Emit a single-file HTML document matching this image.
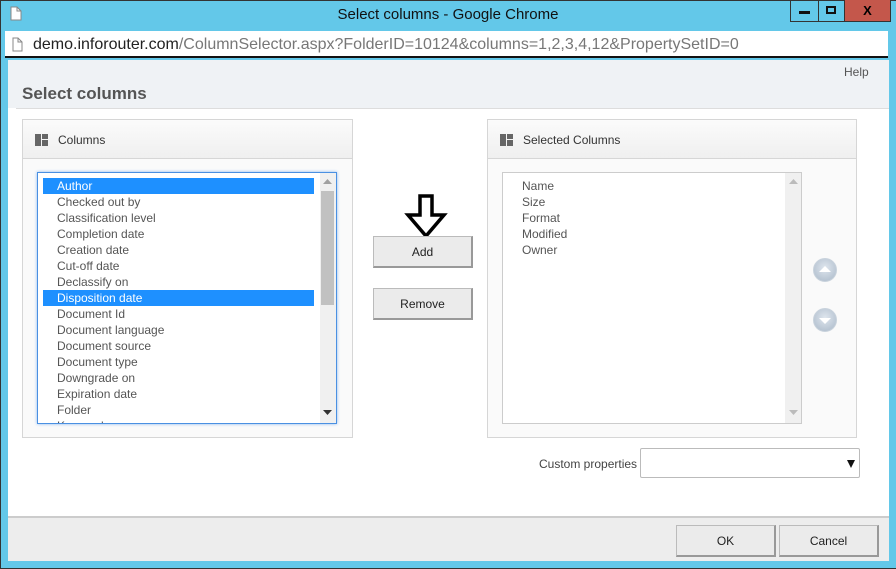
<!DOCTYPE html>
<html><head><style>
*{margin:0;padding:0;box-sizing:border-box}
body{width:896px;height:569px;background:#63c8e9;position:relative;overflow:hidden;font-family:"Liberation Sans",sans-serif;}
.abs{position:absolute}
.title{left:0;top:0;width:896px;text-align:center;top:6px;font-size:15px;color:#111}
.wb{top:0;height:22px;border:1px solid #333;border-top:none}
.addr{left:5px;top:31px;width:883px;height:27px;background:#fff;border-bottom:2px solid #111;font-size:16px;line-height:27px;padding-left:28px;color:#222}
.addr span{color:#777}
.content{left:8px;top:60px;width:881px;height:501px;background:#fff}
.panel{background:#fafafa;border:1px solid #d6d6d6}
.ph{height:39px;border-bottom:1px solid #d6d6d6;background:linear-gradient(#fbfbfb,#efefef);font-size:12px;color:#333;line-height:40px;padding-left:35px;position:relative}
.ic{position:absolute;left:12px;top:14px;width:13px;height:12px}
.list{background:#fff;font-size:12px;color:#555;line-height:16px}
.sel{background:#1e90ff;color:#fff}
.btn{background:#ebebeb;border:1px solid #bbb;border-right:2px solid #999;border-bottom:2px solid #999;text-align:center;font-size:12px;color:#222}
.circ{width:24px;height:24px;border-radius:50%;background:radial-gradient(circle at 50% 40%,#dfe6ee,#a9b8c8);border:1px solid #c8d2dc}
</style></head><body>
<div class="abs" style="left:0;top:0;width:896px;height:1px;background:#333"></div>
<div class="abs" style="left:0;top:0;width:1px;height:569px;background:#333"></div>
<div class="abs" style="left:0;top:568px;width:896px;height:1px;background:#333"></div>
<svg class="abs" style="left:10px;top:6px" width="12" height="15"><path d="M1 1H7L11 5V14H1Z" fill="#fff" stroke="#888"/><path d="M7 1V5H11" fill="none" stroke="#888"/></svg>
<div class="abs title">Select columns - Google Chrome</div>
<div class="abs wb" style="left:790px;width:29px"><div class="abs" style="left:8px;top:11px;width:11px;height:3px;background:#111"></div></div>
<div class="abs wb" style="left:818px;width:27px;border-left:none"><div class="abs" style="left:8px;top:6px;width:10px;height:8px;border:2px solid #111"></div></div>
<div class="abs wb" style="left:844px;width:47px;background:#c4574b;border-left:1px solid #333;text-align:center;font-weight:bold;font-size:13px;line-height:21px">X</div>
<div class="abs addr">demo.inforouter.com<span>/ColumnSelector.aspx?FolderID=10124&amp;columns=1,2,3,4,12&amp;PropertySetID=0</span></div>
<svg class="abs" style="left:12px;top:37px" width="11" height="15"><path d="M1 1H6L10 5V14H1Z" fill="#fff" stroke="#888"/><path d="M6 1V5H10" fill="none" stroke="#888"/></svg>
<div class="abs content">
  <div class="abs" style="left:0;top:0;width:881px;height:48px;background:#eff2f5"></div>
  <div class="abs" style="left:836px;top:5px;font-size:12px;color:#555">Help</div>
  <div class="abs" style="left:14px;top:24px;font-size:17px;font-weight:bold;color:#555">Select columns</div>
  <div class="abs" style="left:8px;top:48px;width:873px;height:1px;background:#ddd"></div>

  <div class="abs panel" style="left:14px;top:59px;width:331px;height:319px">
    <div class="ph"><svg class="ic" viewBox="0 0 13 12"><rect x="0" y="0" width="6" height="12" fill="#666"/><rect x="7" y="0" width="6" height="5" fill="#666"/><rect x="7" y="6" width="6" height="6" fill="#666"/></svg>Columns</div>
    <div class="abs list" style="left:14px;top:52px;width:300px;height:252px;border:1px solid #4a90e2;box-shadow:0 0 3px #8ab8f0;overflow:hidden">
      <div style="position:absolute;left:5px;top:5px;width:271px">
      <div class="sel" style="padding-left:14px">Author</div>
      <div style="padding-left:14px">Checked out by</div>
      <div style="padding-left:14px">Classification level</div>
      <div style="padding-left:14px">Completion date</div>
      <div style="padding-left:14px">Creation date</div>
      <div style="padding-left:14px">Cut-off date</div>
      <div style="padding-left:14px">Declassify on</div>
      <div class="sel" style="padding-left:14px">Disposition date</div>
      <div style="padding-left:14px">Document Id</div>
      <div style="padding-left:14px">Document language</div>
      <div style="padding-left:14px">Document source</div>
      <div style="padding-left:14px">Document type</div>
      <div style="padding-left:14px">Downgrade on</div>
      <div style="padding-left:14px">Expiration date</div>
      <div style="padding-left:14px">Folder</div>
      <div style="padding-left:14px">Keywords</div>
      </div>
      <div class="abs" style="left:282px;top:0;width:16px;height:250px;background:#f0f0f0"></div>
      <div class="abs" style="left:283px;top:18px;width:13px;height:114px;background:#c1c1c1"></div>
      <svg class="abs" style="left:285px;top:6px" width="9" height="6"><path d="M0 5L4.5 0L9 5Z" fill="#a0a0a0"/></svg>
      <svg class="abs" style="left:285px;top:237px" width="9" height="6"><path d="M0 0L4.5 5L9 0Z" fill="#333"/></svg>
    </div>
  </div>

  <svg class="abs" style="left:396px;top:134px" width="46" height="48"><path d="M16 2H28V21H40L22 42L4 21H16Z" fill="#fff" stroke="#000" stroke-width="3.5" stroke-linejoin="miter"/></svg>
  <div class="abs btn" style="left:365px;top:176px;width:100px;height:32px;line-height:31px">Add</div>
  <div class="abs btn" style="left:365px;top:228px;width:100px;height:32px;line-height:31px">Remove</div>

  <div class="abs panel" style="left:479px;top:59px;width:370px;height:319px">
    <div class="ph"><svg class="ic" viewBox="0 0 13 12"><rect x="0" y="0" width="6" height="12" fill="#666"/><rect x="7" y="0" width="6" height="5" fill="#666"/><rect x="7" y="6" width="6" height="6" fill="#666"/></svg>Selected Columns</div>
    <div class="abs list" style="left:14px;top:52px;width:300px;height:252px;border:1px solid #ccc;overflow:hidden">
      <div style="position:absolute;left:19px;top:5px">
      <div>Name</div><div>Size</div><div>Format</div><div>Modified</div><div>Owner</div>
      </div>
      <div class="abs" style="left:282px;top:0;width:17px;height:250px;background:#f0f0f0"></div>
      <svg class="abs" style="left:286px;top:6px" width="9" height="6"><path d="M0 5L4.5 0L9 5Z" fill="#bbb"/></svg>
      <svg class="abs" style="left:286px;top:237px" width="9" height="6"><path d="M0 0L4.5 5L9 0Z" fill="#bbb"/></svg>
    </div>
    <div class="abs circ" style="left:325px;top:138px"><svg width="24" height="24" style="position:absolute;left:-1px;top:-1px"><path d="M6 14L12 8L18 14Z" fill="#fff"/></svg></div>
    <div class="abs circ" style="left:325px;top:188px"><svg width="24" height="24" style="position:absolute;left:-1px;top:-1px"><path d="M6 10L12 16L18 10Z" fill="#fff"/></svg></div>
  </div>

  <div class="abs" style="left:531px;top:397px;font-size:12px;color:#444">Custom properties</div>
  <div class="abs" style="left:632px;top:388px;width:220px;height:30px;border:1px solid #bbb;border-radius:2px;background:#fff"><svg class="abs" style="left:206px;top:11px" width="8" height="8"><path d="M0 0H8L4 8Z" fill="#111"/></svg></div>

  <div class="abs" style="left:0;top:456px;width:881px;height:2px;background:#ccc"></div>
  <div class="abs" style="left:0;top:458px;width:881px;height:43px;background:#ededed"></div>
  <div class="abs btn" style="left:668px;top:465px;width:100px;height:32px;line-height:31px">OK</div>
  <div class="abs btn" style="left:771px;top:465px;width:100px;height:32px;line-height:31px">Cancel</div>
</div>
</body></html>
